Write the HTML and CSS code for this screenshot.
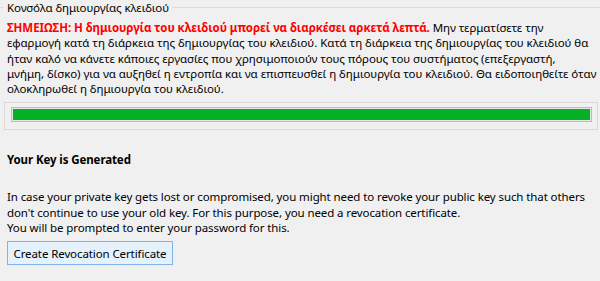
FILE: index.html
```html
<!DOCTYPE html>
<html lang="el">
  <head>
    <meta charset="UTF-8" />
    <title>Κονσόλα δημιουργίας κλειδιού</title>
    <link rel="stylesheet" href="styles.css">
  </head>
  <body>
    <div class="console">
      <div class="console-head"><span>Κονσόλα δημιουργίας κλειδιού</span></div>
      <p class="note">
        <span class="warn">ΣΗΜΕΙΩΣΗ: Η δημιουργία του κλειδιού μπορεί να διαρκέσει αρκετά λεπτά.</span>
        Μην τερματίσετε την<br />
        εφαρμογή κατά τη διάρκεια της δημιουργίας του κλειδιού. Κατά τη διάρκεια της δημιουργίας του κλειδιού θα<br />
        ήταν καλό να κάνετε κάποιες εργασίες που χρησιμοποιούν τους πόρους του συστήματος (επεξεργαστή,<br />
        μνήμη, δίσκο) για να αυξηθεί η εντροπία και να επισπευσθεί η δημιουργία του κλειδιού. Θα ειδοποιηθείτε όταν<br />
        ολοκληρωθεί η δημιουργία του κλειδιού.
      </p>
    </div>

    <div class="progress-frame">
      <div class="progress">
        <div class="progress-fill" style="width: 100%"></div>
      </div>
    </div>

    <h2 class="done-title">Your Key is Generated</h2>

    <p class="info">
      In case your private key gets lost or compromised, you might need to revoke your public key such that others<br />
      don't continue to use your old key. For this purpose, you need a revocation certificate.<br />
      You will be prompted to enter your password for this.
    </p>

    <button type="button" class="revoke-btn">Create Revocation Certificate</button>
  </body>
</html>
```

FILE: styles.css
```css
html,
body {
  margin: 0;
  padding: 0;
}

body {
  background-color: #f0f0f0;
  font-family: "Noto Sans", "DejaVu Sans", sans-serif;
  font-size: 11.5px;
  letter-spacing: -0.1px;
  color: #000;
  width: 600px;
  height: 281px;
  overflow: hidden;
}

.console-head {
  display: flex;
  align-items: center;
  height: 15px;
}

.console-head::before,
.console-head::after {
  content: "";
  border-top: 1px solid #dcdcdc;
}

.console-head::before {
  width: 3px;
}

.console-head::after {
  flex: 1;
}

.console-head span {
  padding: 0 3px 0 4px;
  line-height: 15px;
  white-space: nowrap;
}

.note {
  margin: 5px 0 0 7px;
  height: 82px;
  line-height: 15.3px;
  letter-spacing: -0.06px;
  white-space: nowrap;
}

.warn {
  color: #ff0000;
  font-weight: bold;
}

.progress-frame {
  margin: 0 2px 0 4px;
  height: 28px;
  border: 1px solid #dadada;
  padding: 4px 5px 0 6px;
  box-sizing: border-box;
}

.progress {
  height: 15px;
  border: 1px solid #bcbcbc;
  background-color: #e6e6e6;
  padding: 1px;
  box-sizing: border-box;
}

.progress-fill {
  height: 100%;
  background-color: #06b025;
}

.done-title {
  margin: 22px 0 0 7px;
  font-size: 11.5px;
  font-weight: bold;
  line-height: 15px;
}

.info {
  margin: 22px 0 0 7px;
  line-height: 15.5px;
  white-space: nowrap;
}

.revoke-btn {
  display: block;
  margin: 5.5px 0 0 7px;
  width: 166px;
  height: 24px;
  padding: 0;
  font-family: inherit;
  font-size: 11.5px;
  letter-spacing: -0.1px;
  color: #000;
  background-color: #e5f1fb;
  border: 1px solid #7eb4ea;
  border-radius: 0;
}
```
